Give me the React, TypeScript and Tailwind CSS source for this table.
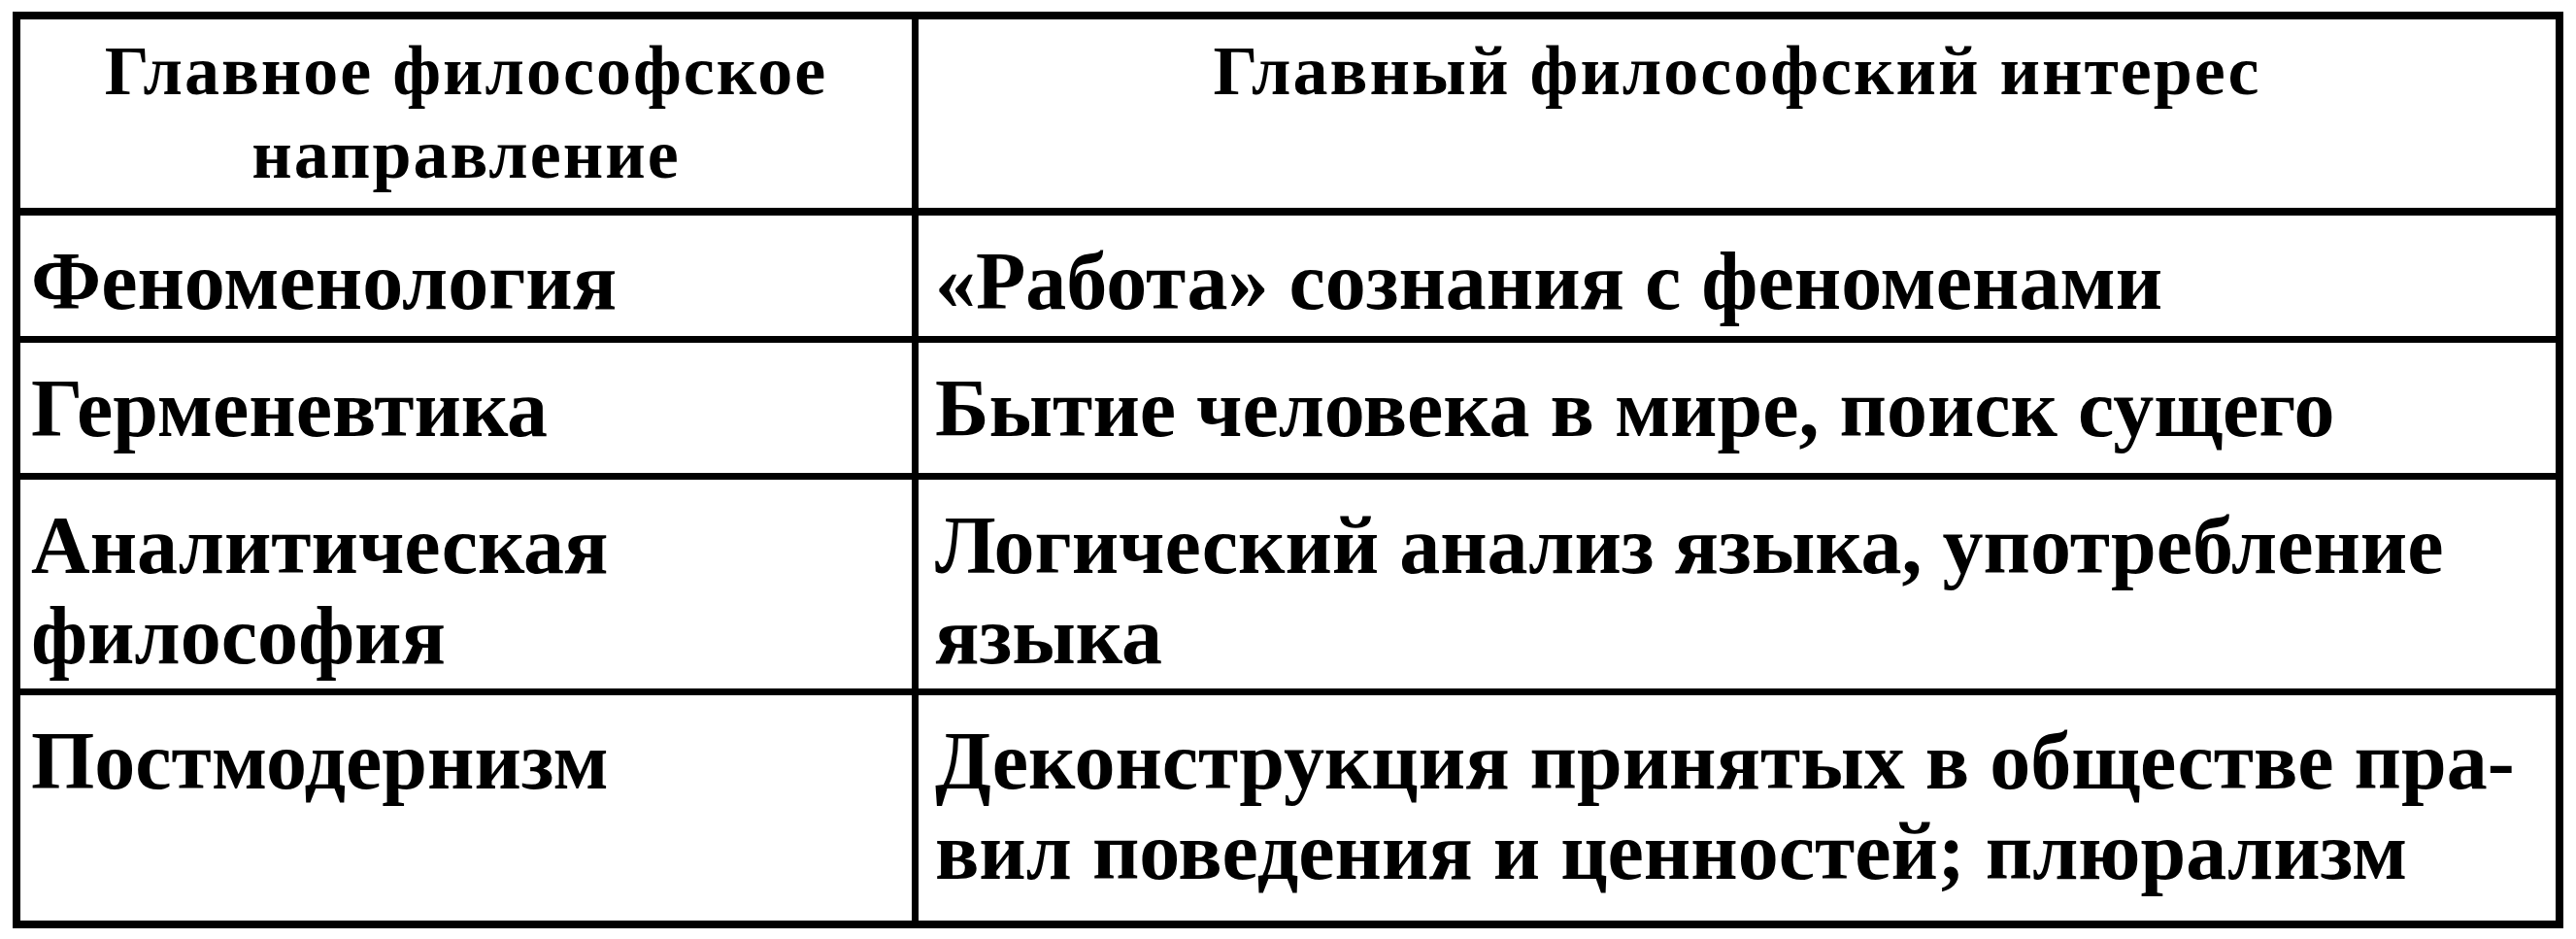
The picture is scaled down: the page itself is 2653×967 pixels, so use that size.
const rows = [
  {
    h: "h-[131px]",
    left: ["Феноменология"],
    right: ["«Работа» сознания с феноменами"],
  },
  {
    h: "h-[141px]",
    left: ["Герменевтика"],
    right: ["Бытие человека в мире, поиск сущего"],
  },
  {
    h: "h-[222px]",
    left: ["Аналитическая", "философия"],
    right: ["Логический анализ языка, употребление", "языка"],
  },
  {
    h: "h-[232px]",
    left: ["Постмодернизм"],
    right: ["Деконструкция принятых в обществе пра-", "вил поведения и ценностей; плюрализм"],
  },
];

function Lines({ lines }: { lines: string[] }) {
  return (
    <>
      {lines.map((l, i) => (
        <div key={i} className="whitespace-nowrap">
          {l}
        </div>
      ))}
    </>
  );
}

export default function App() {
  return (
    <main className="h-[967px] w-[2653px] bg-white pl-[13px] pt-[12px] font-['Liberation_Serif',serif] font-bold text-black">
      <div className="w-[2627px] border-[8px] border-black">
        <div className="grid h-[202px] grid-cols-[925px_1fr] border-b-[8px] border-black text-[72px] leading-[86px] tracking-[2px]">
          <div className="border-r-[7px] border-black pt-[10px] text-center">
            <div>Главное философское</div>
            <div>направление</div>
          </div>
          <div className="pt-[10px] text-center">Главный философский интерес</div>
        </div>

        {rows.map((r, i) => (
          <div
            key={i}
            className={`grid grid-cols-[925px_1fr] text-[84px] leading-[93px] ${r.h} ${
              i < rows.length - 1 ? "border-b-[7px] border-black" : ""
            }`}
          >
            <div className="border-r-[7px] border-black pl-[11px] pt-[21px]">
              <Lines lines={r.left} />
            </div>
            <div className="pl-[17px] pt-[21px]">
              <Lines lines={r.right} />
            </div>
          </div>
        ))}
      </div>
    </main>
  );
}
